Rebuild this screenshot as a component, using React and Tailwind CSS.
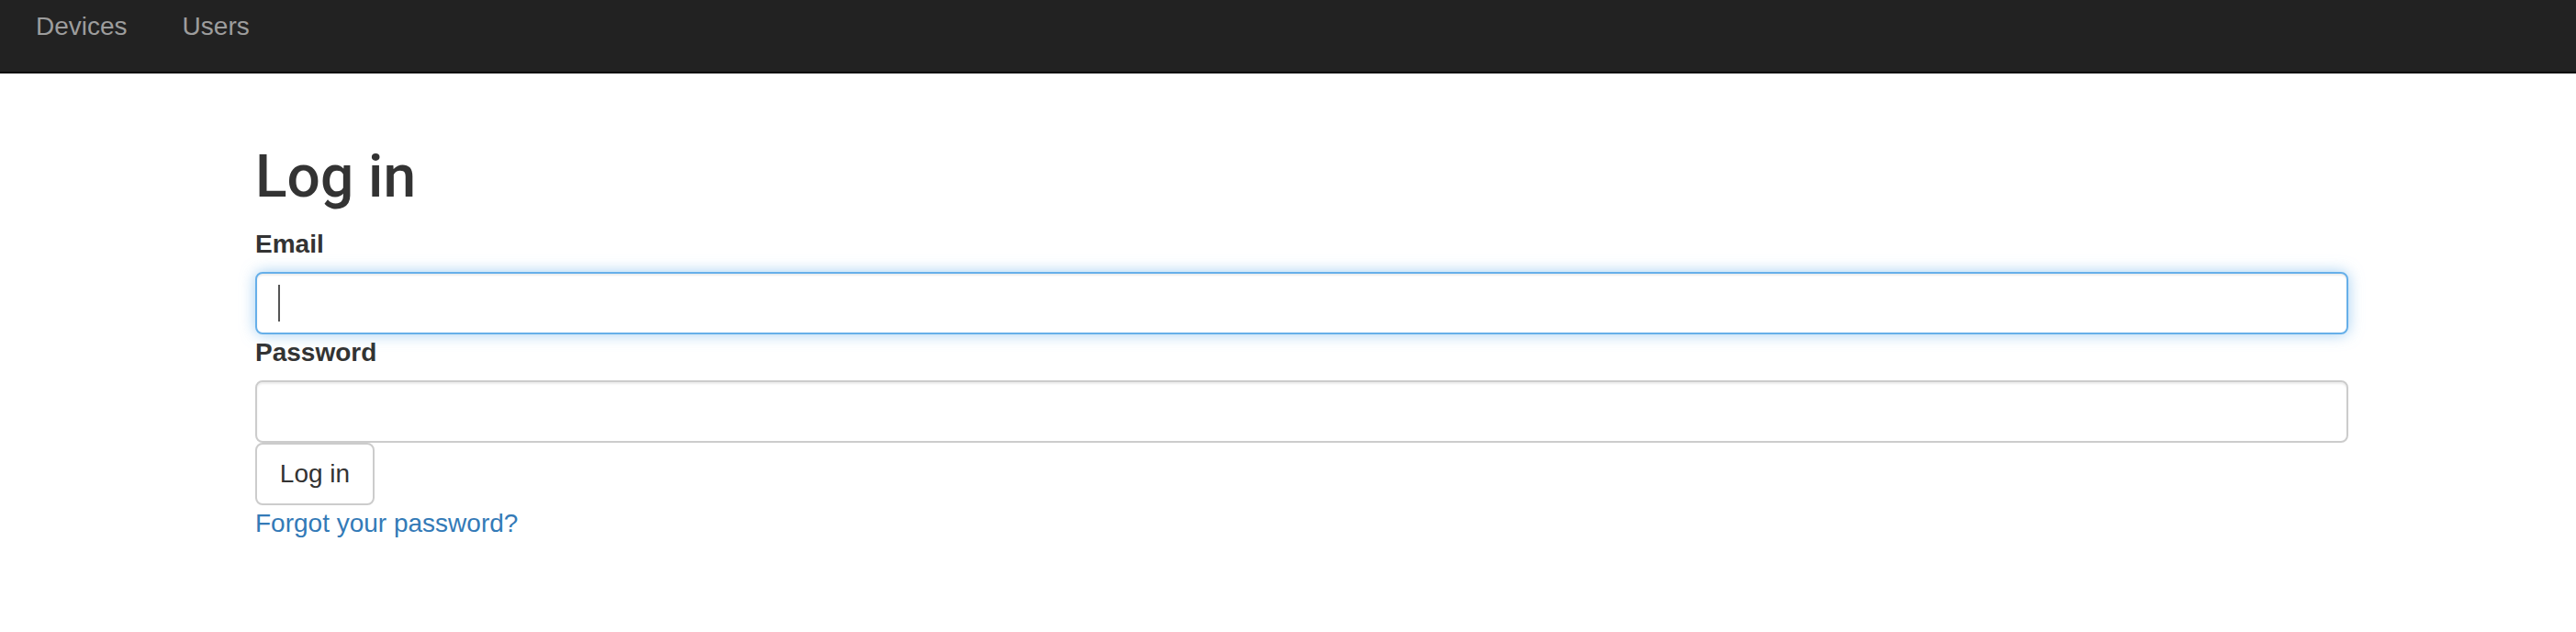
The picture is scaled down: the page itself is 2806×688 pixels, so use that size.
import React from 'react';

const font = { fontFamily: '"Liberation Sans", Arial, Helvetica, sans-serif' };

const NavLink = ({ children }) => (
  <a href="#" className="px-[30px] pt-[9px] leading-[40px] text-[28px] text-[#9d9d9d] no-underline">
    {children}
  </a>
);

const Label = ({ children }) => (
  <label className="block font-bold text-[28px] leading-[40px] mb-[10px] text-[#333]">{children}</label>
);

export default function App() {
  return (
    <div className="min-h-screen bg-white" style={font}>
      <nav className="h-[80px] bg-[#222] border-b-2 border-[#080808] flex items-start pl-[9px]">
        <NavLink>Devices</NavLink>
        <NavLink>Users</NavLink>
      </nav>

      <main className="pl-[278px] w-[2558px]">
        <h1 className="mt-[78px] mb-[18px] font-['Roboto',sans-serif] text-[64px] leading-[1.1] font-medium text-[#333]">
          Log in
        </h1>

        <form onSubmit={(e) => e.preventDefault()}>
          <Label>Email</Label>
          <div className="relative">
            <input
              type="email"
              className="block w-full h-[68px] px-[24px] border-2 border-[#66afe9] rounded-[8px] bg-white text-[28px] text-[#555] outline-none shadow-[inset_0_2px_2px_rgba(0,0,0,0.075),0_0_16px_rgba(102,175,233,0.6)]"
            />
            <span className="absolute left-[25px] top-[14px] h-[40px] w-[2px] bg-[#555]" />
          </div>

          <Label>Password</Label>
          <input
            type="password"
            className="block w-full h-[68px] px-[24px] border-2 border-[#ccc] rounded-[8px] bg-white text-[28px] text-[#555] outline-none shadow-[inset_0_2px_2px_rgba(0,0,0,0.075)]"
          />

          <button
            type="submit"
            className="block w-[130px] h-[68px] border-2 border-[#ccc] rounded-[8px] bg-white text-[28px] leading-[40px] text-[#333]"
          >
            Log in
          </button>
        </form>

        <a href="#" className="block w-fit text-[28px] leading-[40px] text-[#337ab7] no-underline">
          Forgot your password?
        </a>
      </main>
    </div>
  );
}
